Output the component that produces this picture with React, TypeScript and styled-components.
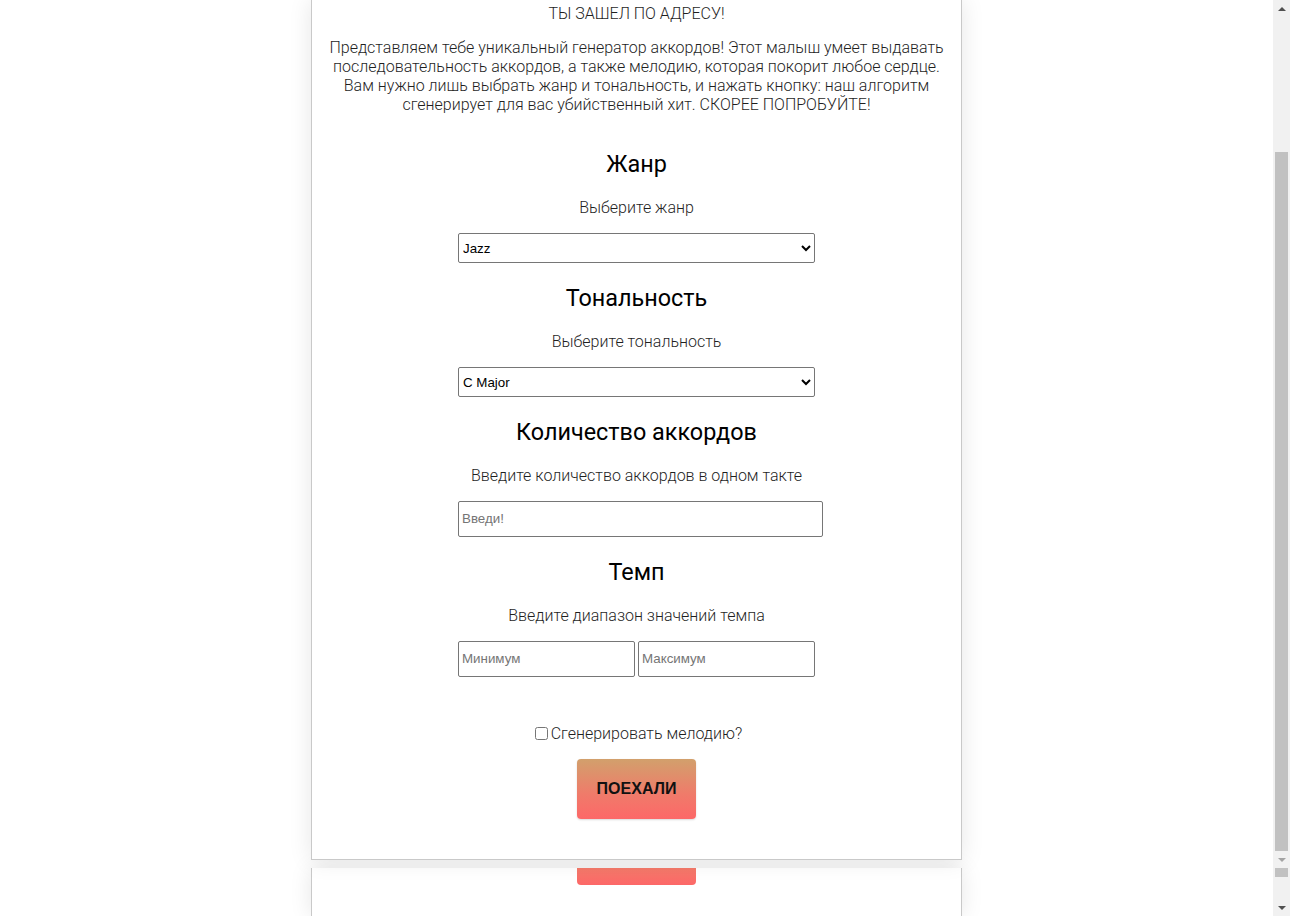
import React from "react";
import styled, { createGlobalStyle } from "styled-components";

const Global = createGlobalStyle`
  html, body { margin: 0; padding: 0; height: 916px; overflow: hidden; background: #fff; }
  body { font-family: Roboto, "Noto Sans", sans-serif; }
  * { box-sizing: border-box; }
`;

const Screen = styled.div`
  display: flex;
  height: 916px;
  width: 1290px;
  overflow: hidden;
`;

const Main = styled.div`
  flex: 1;
  display: flex;
  flex-direction: column;
  align-items: center;
  background: #fff;
`;

const Card = styled.div`
  width: 651px;
  background: #fff;
  border: 1px solid #c9c9c9;
  border-top: none;
  box-shadow: 0 0 22px rgba(0, 0, 0, 0.1);
  display: flex;
  flex-direction: column;
  align-items: center;
  padding: 4px 10px 40px;
  text-align: center;
  position: relative;
  z-index: 1;
`;

const Fragment = styled.div`
  width: 651px;
  height: 60px;
  margin-top: 8px;
  background: #fff;
  border-left: 1px solid #c9c9c9;
  border-right: 1px solid #c9c9c9;
  box-shadow: 0 0 22px rgba(0, 0, 0, 0.1);
  display: flex;
  justify-content: center;
`;

const ButtonTail = styled.div`
  width: 119px;
  height: 17px;
  border-radius: 0 0 4px 4px;
  background: linear-gradient(180deg, #f47a6a, #fd6868);
`;

const Lead = styled.p<{ $gap: number }>`
  margin: 0 0 ${(p) => p.$gap}px;
  font-size: 16px;
  line-height: 19px;
  font-weight: 300;
  color: #1f1f1f;
`;

const Title = styled.h2`
  margin: 20.75px 0 20px;
  font-size: 23.4px;
  line-height: 28px;
  font-weight: 400;
  color: #000;
`;

const Form = styled.div`
  display: flex;
  flex-direction: column;
  align-items: center;
  width: 100%;
`;

const Hint = styled.p`
  margin: 0 0 16px;
  font-size: 16px;
  line-height: 19px;
  font-weight: 300;
  color: #1f1f1f;
`;

const ControlRow = styled.div`
  width: 357px;
  display: flex;
  gap: 3px;
`;

const Select = styled.select`
  width: 357px;
  height: 30px;
  border: 1px solid #767676;
  border-radius: 2px;
  background: #fff;
  font-family: "Liberation Sans", Arial, sans-serif;
  font-size: 13.33px;
  color: #000;
  padding: 0;
`;

const TextInput = styled.input<{ $w: number }>`
  width: ${(p) => p.$w}px;
  flex: none;
  height: 36px;
  border: 1px solid #767676;
  border-radius: 2px;
  padding: 1px 3px;
  font-family: "Liberation Sans", Arial, sans-serif;
  font-size: 13.33px;
  color: #000;
  &::placeholder { color: #757575; }
`;

const CheckLabel = styled.label`
  margin-top: 47px;
  padding-left: 4px;
  display: flex;
  align-items: center;
  font-size: 16px;
  line-height: 19px;
  font-weight: 300;
  color: #1f1f1f;
`;

const Check = styled.input`
  width: 13px;
  height: 13px;
  margin: 0 3px 0 0;
`;

const GoButton = styled.button`
  margin-top: 16px;
  width: 119px;
  height: 60px;
  border: none;
  border-radius: 4px;
  background: linear-gradient(180deg, #d2a06c 0%, #f07a6a 60%, #fd6868 100%);
  box-shadow: 0 1px 2px rgba(0, 0, 0, 0.15);
  font-family: "Liberation Sans", Arial, sans-serif;
  font-weight: 700;
  font-size: 16px;
  color: #111;
`;

const Scrollbar = styled.div`
  width: 17px;
  background: #f1f1f1;
  display: flex;
  flex-direction: column;
  align-items: center;
`;

const Arrow = styled.div<{ $dir: "up" | "down"; $light?: boolean }>`
  height: 17px;
  width: 17px;
  flex: none;
  display: flex;
  align-items: center;
  justify-content: center;
  &::after {
    content: "";
    border-left: 4px solid transparent;
    border-right: 4px solid transparent;
    ${(p) =>
      p.$dir === "up"
        ? `border-bottom: 4px solid ${p.$light ? "#a3a3a3" : "#505050"};`
        : `border-top: 4px solid ${p.$light ? "#a3a3a3" : "#505050"};`}
  }
`;

const Thumb = styled.div<{ $h: number; $top?: number }>`
  width: 13px;
  flex: none;
  height: ${(p) => p.$h}px;
  margin-top: ${(p) => p.$top ?? 0}px;
  background: #c1c1c1;
`;

const Spacer = styled.div`
  flex: 1;
`;

export default function App() {
  return (
    <>
      <Global />
      <Screen>
        <Main>
          <Card>
            <Lead $gap={15}>ТЫ ЗАШЕЛ ПО АДРЕСУ!</Lead>
            <Lead $gap={15.5}>
              Представляем тебе уникальный генератор аккордов! Этот малыш умеет выдавать
              последовательность аккордов, а также мелодию, которая покорит любое сердце.
              Вам нужно лишь выбрать жанр и тональность, и нажать кнопку: наш алгоритм
              сгенерирует для вас убийственный хит. СКОРЕЕ ПОПРОБУЙТЕ!
            </Lead>
            <Form>
              <Title>Жанр</Title>
              <Hint>Выберите жанр</Hint>
              <Select defaultValue="Jazz">
                <option>Jazz</option>
                <option>Pop</option>
                <option>Rock</option>
              </Select>

              <Title>Тональность</Title>
              <Hint>Выберите тональность</Hint>
              <Select defaultValue="C Major">
                <option>C Major</option>
                <option>A Minor</option>
              </Select>

              <Title>Количество аккордов</Title>
              <Hint>Введите количество аккордов в одном такте</Hint>
              <ControlRow>
                <TextInput $w={365} placeholder="Введи!" />
              </ControlRow>

              <Title>Темп</Title>
              <Hint>Введите диапазон значений темпа</Hint>
              <ControlRow>
                <TextInput $w={177} placeholder="Минимум" />
                <TextInput $w={177} placeholder="Максимум" />
              </ControlRow>

              <CheckLabel>
                <Check type="checkbox" />
                Сгенерировать мелодию?
              </CheckLabel>
              <GoButton>ПОЕХАЛИ</GoButton>
            </Form>
          </Card>
          <Fragment>
            <ButtonTail />
          </Fragment>
        </Main>
        <Scrollbar>
          <Arrow $dir="up" />
          <Thumb $h={699} $top={135} />
          <Arrow $dir="down" $light />
          <Thumb $h={9} />
          <Spacer />
          <Arrow $dir="down" />
        </Scrollbar>
      </Screen>
    </>
  );
}
